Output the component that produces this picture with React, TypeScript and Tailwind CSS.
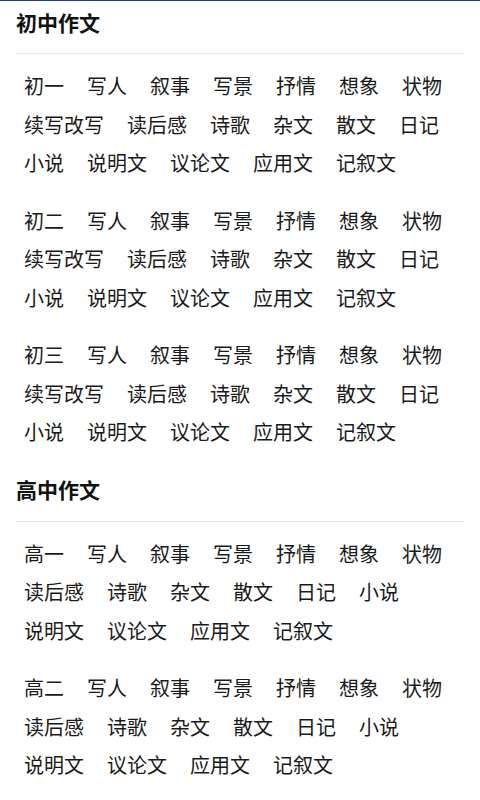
import React from "react";

const juniorRest = [
  "写人", "叙事", "写景", "抒情", "想象", "状物",
  "续写改写", "读后感", "诗歌", "杂文", "散文", "日记",
  "小说", "说明文", "议论文", "应用文", "记叙文",
];
const seniorRest = [
  "写人", "叙事", "写景", "抒情", "想象", "状物",
  "读后感", "诗歌", "杂文", "散文", "日记", "小说",
  "说明文", "议论文", "应用文", "记叙文",
];

function Group({ items }: { items: string[] }) {
  return (
    <div className="flex flex-wrap gap-x-[23px] px-6">
      {items.map((t, i) => (
        <span key={i} className="text-[20px] leading-[38.5px] text-[#1a1a1a] whitespace-nowrap">
          {t}
        </span>
      ))}
    </div>
  );
}

function Section({
  title,
  grades,
  rest,
  first,
}: {
  title: string;
  grades: string[];
  rest: string[];
  first?: boolean;
}) {
  return (
    <div className={first ? "pt-px" : "pt-[17px]"}>
      <h2 className="px-4 text-[21px] leading-[40px] font-bold text-[#111]">{title}</h2>
      <div className={"mx-4 h-px bg-[#e6e6e6] " + (first ? "mt-[11px]" : "mt-[12px]")} />
      <div className="pt-[13px] flex flex-col gap-[19px]">
        {grades.map((g, gi) => (
          <Group key={gi} items={[g, ...rest]} />
        ))}
      </div>
    </div>
  );
}

export default function App() {
  return (
    <div
      className="min-h-[800px] bg-white border-t border-[#1c3a8f]"
      style={{ fontFamily: '"Noto Sans CJK SC", "Noto Sans", sans-serif' }}
    >
      <Section title="初中作文" grades={["初一", "初二", "初三"]} rest={juniorRest} first />
      <Section title="高中作文" grades={["高一", "高二"]} rest={seniorRest} />
    </div>
  );
}
